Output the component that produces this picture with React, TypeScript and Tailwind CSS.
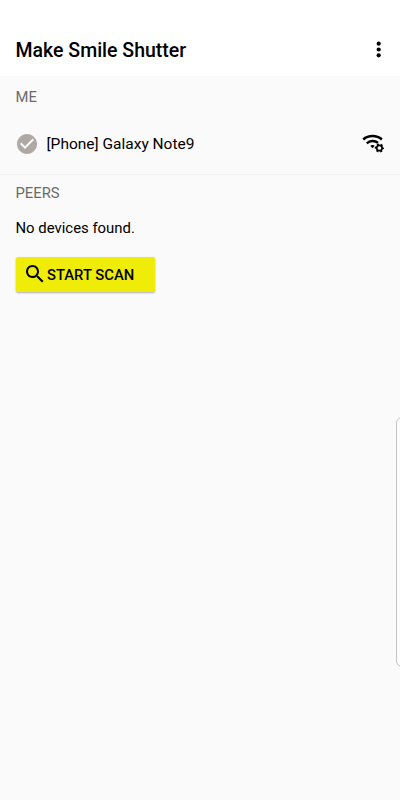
import React from "react";

function WifiSettingsIcon() {
  return (
    <svg width="24" height="20" viewBox="0 0 24 20" fill="none" className="shrink-0">
      <path d="M2.2 6.5C7.5 1.9 15.6 1.9 20.9 6.5" stroke="#000" strokeWidth="2.5" />
      <path d="M5.8 10.3C9 7.3 13.8 7.3 17 9.8" stroke="#000" strokeWidth="2.4" />
      <path d="M9.3 12.7C10.6 11.6 12.4 11.6 13.7 12.7L11.5 15.2Z" fill="#000" />
      <circle cx="18.4" cy="15" r="2.7" stroke="#000" strokeWidth="1.7" />
      <circle cx="18.4" cy="15" r="3.8" stroke="#000" strokeWidth="1.6" strokeDasharray="2 1.979" strokeDashoffset="1" />
    </svg>
  );
}

export default function App() {
  return (
    <div className="relative flex h-[800px] w-[400px] flex-col overflow-hidden bg-[#fafafa] font-['Roboto',sans-serif] text-black">
      <header className="flex h-[76px] items-center justify-between bg-white pt-6 pr-[18.5px] pl-[15.5px]">
        <h1 className="pt-0.5 text-[19.5px] leading-6 font-medium whitespace-nowrap">Make Smile Shutter</h1>
        <svg width="6" height="18" viewBox="0 0 6 18" className="-mt-px">
          <circle cx="2.7" cy="2.7" r="2.1" />
          <circle cx="2.7" cy="8.5" r="2.1" />
          <circle cx="2.7" cy="14.3" r="2.1" />
        </svg>
      </header>

      <section className="h-[98px] pt-[11px]">
        <h2 className="px-[15.5px] text-[14.8px] leading-5 text-[#6a6a6a]">ME</h2>
        <div className="mt-[24px] flex h-6 items-center pr-[15px] pl-[15px]">
          <svg width="24" height="24" viewBox="0 0 24 24" fill="#aea9a5" className="mt-px shrink-0">
            <path d="M12 2C6.48 2 2 6.48 2 12s4.48 10 10 10 10-4.48 10-10S17.52 2 12 2zm-2 15l-5-5 1.41-1.41L10 14.17l7.59-7.59L19 8l-9 9z" />
          </svg>
          <span className="ml-[7.5px] flex-1 pt-0.5 text-[15.5px] leading-6 whitespace-nowrap">[Phone] Galaxy Note9</span>
          <WifiSettingsIcon />
        </div>
      </section>

      <section className="flex flex-col items-start border-t border-[#f3f3f3] px-[15.5px] pt-2">
        <h2 className="text-[14.8px] leading-5 text-[#6a6a6a]">PEERS</h2>
        <p className="mt-[15px] text-[14.9px] leading-5 whitespace-nowrap">No devices found.</p>
        <button className="mt-[19px] flex h-[35px] w-[139.5px] items-center rounded-xs bg-[#efec08] pl-[7.5px] text-[14.8px] font-medium shadow-[0_1px_2px_rgba(0,0,0,0.3)]">
          <svg width="24" height="24" viewBox="0 0 24 24" className="-mt-px shrink-0">
            <path d="M15.5 14h-.79l-.28-.27C15.41 12.59 16 11.11 16 9.5 16 5.91 13.09 3 9.5 3S3 5.91 3 9.5 5.91 16 9.5 16c1.61 0 3.09-.59 4.23-1.57l.27.28v.79l5 4.99L20.49 19l-4.99-5zm-6 0C7.01 14 5 11.99 5 9.5S7.01 5 9.5 5 14 7.01 14 9.5 11.99 14 9.5 14z" />
          </svg>
          <span className="pt-0.5 whitespace-nowrap">START SCAN</span>
        </button>
      </section>

      <div className="absolute top-[417px] left-[396px] h-[250px] w-5 rounded-md border border-[#c4c4c4] bg-[#fcfcfc]" />
    </div>
  );
}
